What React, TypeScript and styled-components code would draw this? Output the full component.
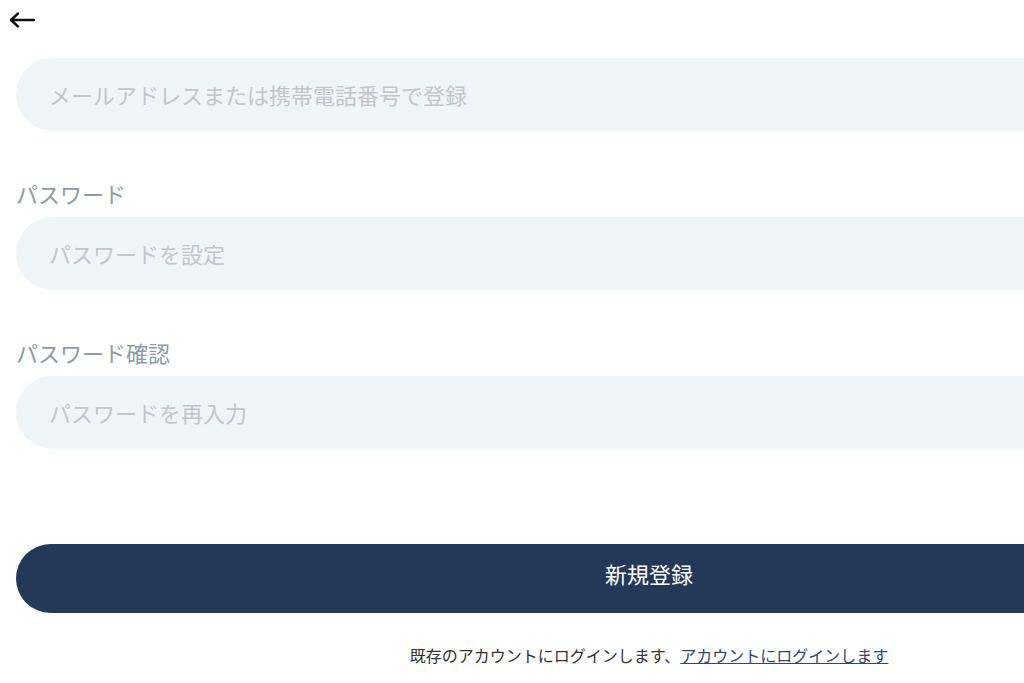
import React from "react";
import styled, { createGlobalStyle } from "styled-components";

const GlobalStyle = createGlobalStyle`
  body {
    margin: 0;
    background: #fff;
    font-family: "Noto Sans CJK JP", "Noto Sans", sans-serif;
  }
`;

const Page = styled.div`
  width: 1266px;
  padding: 0 16px 20px;
  display: flex;
  flex-direction: column;
`;

const BackButton = styled.button`
  margin: 6px 0 0 -9px;
  width: 30px;
  height: 28px;
  padding: 0;
  border: none;
  background: none;
  display: flex;
  align-items: center;
  justify-content: center;
  cursor: pointer;
`;

const Form = styled.div`
  display: flex;
  flex-direction: column;
  margin-top: 24px;
`;

const Field = styled.div<{ $gap?: number }>`
  display: flex;
  flex-direction: column;
  margin-top: ${(p) => p.$gap ?? 0}px;
`;

const Label = styled.div`
  font-size: 22px;
  line-height: 26px;
  color: #8d9ba4;
  margin-bottom: 11px;
`;

const Input = styled.input`
  height: 73px;
  box-sizing: border-box;
  border: none;
  outline: none;
  border-radius: 37px;
  background: #eff6f8;
  padding: 0 33px 2px;
  font-family: inherit;
  font-size: 22px;
  color: #333;
  &::placeholder {
    color: #c3c6ca;
  }
`;

const Submit = styled.button`
  margin-top: 95px;
  height: 69px;
  padding: 0 0 12px;
  border: none;
  border-radius: 35px;
  background: #243858;
  color: #fff;
  font-family: inherit;
  font-size: 22px;
  cursor: pointer;
`;

const Footer = styled.div`
  margin-top: 30px;
  text-align: center;
  font-size: 16px;
  color: #333;
`;

const Link = styled.a`
  color: #2c4a70;
  text-decoration: underline;
`;

const App = () => {
  return (
    <Page>
      <GlobalStyle />
      <BackButton aria-label="back">
        <svg width="26" height="16" viewBox="0 0 26 16" fill="none">
          <path d="M25 8H3M9 1.5L2 8l7 6.5" stroke="#111" strokeWidth="2.4" strokeLinecap="round" strokeLinejoin="round" />
        </svg>
      </BackButton>
      <Form>
        <Field>
          <Input placeholder="メールアドレスまたは携帯電話番号で登録" />
        </Field>
        <Field $gap={49}>
          <Label>パスワード</Label>
          <Input type="password" placeholder="パスワードを設定" />
        </Field>
        <Field $gap={49}>
          <Label>パスワード確認</Label>
          <Input type="password" placeholder="パスワードを再入力" />
        </Field>
        <Submit>新規登録</Submit>
        <Footer>
          既存のアカウントにログインします、<Link href="#">アカウントにログインします</Link>
        </Footer>
      </Form>
    </Page>
  );
};

export default App;
